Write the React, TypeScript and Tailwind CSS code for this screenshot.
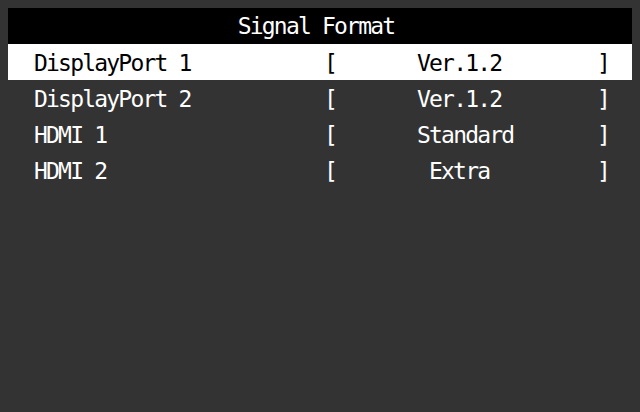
const rows = [
  { label: 'DisplayPort 1', value: 'Ver.1.2', selected: true },
  { label: 'DisplayPort 2', value: 'Ver.1.2' },
  { label: 'HDMI 1', value: 'Standard' },
  { label: 'HDMI 2', value: 'Extra', indent: true },
];

export default function App() {
  return (
    <div
      className="w-[640px] h-[412px] bg-[#333333] p-2 text-[23px] leading-none tracking-[-1.8px] text-white"
      style={{ fontFamily: '"DejaVu Sans Mono", "Liberation Mono", monospace' }}
    >
      {/* header */}
      <div className="h-9 bg-black flex items-center justify-center pr-2 pt-px">
        Signal Format
      </div>

      {/* list of inputs */}
      <div>
        {rows.map((row) => (
          <div
            key={row.label}
            className={`h-9 flex items-center pl-[26px] pt-[2px] ${
              row.selected ? 'bg-white text-black' : ''
            }`}
          >
            <span className="w-[290px]">{row.label}</span>
            <span className="w-[93px]">[</span>
            <span className={`w-[183px] ${row.indent ? 'pl-3' : ''}`}>
              {row.value}
            </span>
            <span className="-ml-[3px]">]</span>
          </div>
        ))}
      </div>
    </div>
  );
}
